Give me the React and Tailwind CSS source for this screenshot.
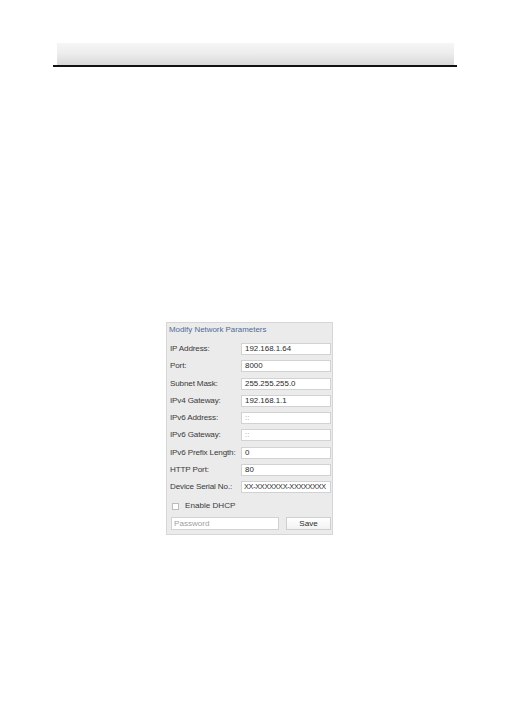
const rows = [
  ["IP Address:", "192.168.1.64"],
  ["Port:", "8000"],
  ["Subnet Mask:", "255.255.255.0"],
  ["IPv4 Gateway:", "192.168.1.1"],
  ["IPv6 Address:", "::", true],
  ["IPv6 Gateway:", "::", true],
  ["IPv6 Prefix Length:", "0"],
  ["HTTP Port:", "80"],
  ["Device Serial No.:", "XX-XXXXXXX-XXXXXXXX"],
];

function Field({ label, value, dim }) {
  const serial = value.startsWith("XX");
  return (
    <div className="flex items-center h-[12px]">
      <span className="w-[74px] pl-[3px] text-[#3a3a3a] whitespace-nowrap tracking-[-0.15px]">{label}</span>
      <div
        className={
          serial
            ? "w-[90px] h-[12px] bg-white border border-[#d2d2d2] flex items-center pl-[2px] overflow-hidden whitespace-nowrap text-[7.3px] tracking-[-0.3px]"
            : "w-[90px] h-[12px] bg-white border border-[#d2d2d2] flex items-center pl-[3px] overflow-hidden whitespace-nowrap text-[7.9px]"
        }
      >
        <span className={dim ? "text-[#9a9a9a]" : "text-[#2a2a2a]"}>{value}</span>
      </div>
    </div>
  );
}

export default function App() {
  return (
    <div className="w-[510px] h-[720px] bg-white font-['Liberation_Sans',Arial,sans-serif]">
      <div className="pt-[43px]">
        <div className="ml-[57px] w-[397px] h-[22px] bg-gradient-to-b from-[#f6f6f6] via-[#ececec] to-[#d8d8d8]" />
        <div className="ml-[53px] w-[404px] h-[2px] bg-[#111]" />
      </div>

      <div className="mt-[255px] ml-[166px] w-[167px] h-[213px] bg-[#ebebeb] border border-[#d6d6d6] text-[8.1px] leading-[10px]">
        <div className="pt-[2px] pl-[2px] text-[#4d6c9a] text-[7.9px]">Modify Network Parameters</div>
        <div className="mt-[8px] flex flex-col gap-[5.3px]">
          {rows.map(([label, value, dim]) => (
            <Field key={label} label={label} value={value} dim={dim} />
          ))}
        </div>
        <div className="mt-[8px] flex items-center pl-[5px] h-[10px]">
          <div className="w-[7px] h-[7px] bg-white border border-[#bdbdbd]" />
          <span className="ml-[6px] text-[#3a3a3a]">Enable DHCP</span>
        </div>
        <div className="mt-[6px] flex items-center pl-[4px] gap-[7px]">
          <div className="w-[108px] h-[13px] bg-white border border-[#d2d2d2] flex items-center pl-[2px] text-[#a0a0a0]">
            Password
          </div>
          <div className="w-[45px] h-[13px] bg-gradient-to-b from-white to-[#f2f2f2] border border-[#cfcfcf] flex items-center justify-center text-[#2a2a2a]">
            Save
          </div>
        </div>
      </div>
    </div>
  );
}
